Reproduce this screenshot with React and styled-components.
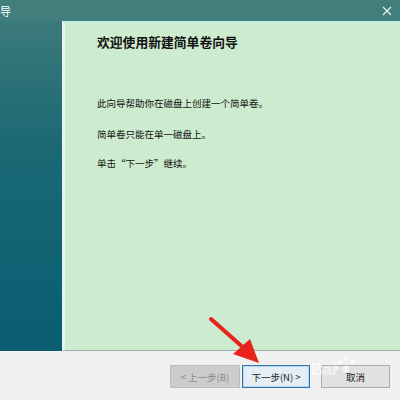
import React from "react"
import styled, { createGlobalStyle } from "styled-components"

const Global = createGlobalStyle`
  html, body {
    margin: 0;
    padding: 0;
    background: #f0f0f0;
  }
  body {
    font-family: "Noto Sans CJK SC", "Noto Sans", sans-serif;
  }
`

const Window = styled.div`
  position: relative;
  width: 400px;
  height: 400px;
  display: flex;
  flex-direction: column;
  overflow: hidden;
`

const TitleBar = styled.div`
  height: 21px;
  flex: 0 0 auto;
  background: #417e7c;
  display: flex;
  align-items: center;
  justify-content: space-between;
  color: #fff;
  font-size: 11px;
  padding: 0 8px 0 0;
  box-sizing: border-box;
`

const Body = styled.div`
  flex: 0 0 330px;
  display: flex;
  flex-direction: row;
`

const SidePanel = styled.div`
  width: 62px;
  flex: 0 0 auto;
  background: linear-gradient(
    180deg,
    #3b7a7b 0%,
    #2f7377 14%,
    #1a6874 40%,
    #0f6273 75%,
    #0b5e72 100%
  );
`

const Content = styled.div`
  flex: 1;
  background: #cdebcf;
  border-left: 3px solid #e6f3f2;
  border-top: 2px solid #c3ecdf;
  border-bottom: 1px solid #a8aca8;
  padding: 10px 0 0 32px;
  color: #111;
`

const Heading = styled.h1`
  margin: 0;
  font-size: 12.8px;
  font-weight: bold;
  line-height: 18px;
`

const Paragraph = styled.p`
  margin: ${(p) => p.$top}px 0 0;
  font-size: 9.5px;
  line-height: 14px;
`

const Footer = styled.div`
  flex: 1;
  background: #f0f0f0;
  display: flex;
  justify-content: flex-end;
  align-items: flex-start;
  padding: 14px 10px 0 0;
`

const Button = styled.button`
  width: ${(p) => p.$w || 69}px;
  height: 23px;
  margin-left: ${(p) => p.$gap || 0}px;
  box-sizing: border-box;
  font-family: inherit;
  font-size: 9.5px;
  padding: 0;
  background: ${(p) => (p.$disabled ? "#cccccc" : p.$focus ? "#e3eef7" : "#e1e1e1")};
  color: ${(p) => (p.$disabled ? "#8a8a8a" : "#1a1a1a")};
  border: 1px solid ${(p) => (p.$disabled ? "#bdbdbd" : p.$focus ? "#2f76b3" : "#adadad")};
  box-shadow: ${(p) => (p.$focus ? "inset 0 0 0 1px #b9d4ea" : "none")};
`

const Watermark = styled.div`
  position: absolute;
  left: 311px;
  top: 360px;
  color: rgba(255, 255, 255, 0.6);
  font-family: "Liberation Sans", sans-serif;
  font-size: 17px;
  font-weight: bold;
  letter-spacing: -0.5px;
  pointer-events: none;
`

const Overlay = styled.svg`
  position: absolute;
  left: 0;
  top: 0;
  pointer-events: none;
`

function CloseIcon() {
  return (
    <svg width="10" height="10" viewBox="0 0 10 10">
      <path d="M1 1 L9 9 M9 1 L1 9" stroke="#e8f0ef" strokeWidth="1.2" />
    </svg>
  )
}

export default function App() {
  return (
    <Window>
      <Global />
      <TitleBar>
        <span>导</span>
        <CloseIcon />
      </TitleBar>
      <Body>
        <SidePanel />
        <Content>
          <Heading>欢迎使用新建简单卷向导</Heading>
          <Paragraph $top={45}>此向导帮助你在磁盘上创建一个简单卷。</Paragraph>
          <Paragraph $top={17}>简单卷只能在单一磁盘上。</Paragraph>
          <Paragraph $top={15}>单击“下一步”继续。</Paragraph>
        </Content>
      </Body>
      <Footer>
        <Button $disabled $w={70}>&lt; 上一步(B)</Button>
        <Button $focus $gap={2} $w={68}>下一步(N) &gt;</Button>
        <Button $gap={11} $w={69}>取消</Button>
      </Footer>
      <Watermark>Bai</Watermark>
      <Overlay width="400" height="400" viewBox="0 0 400 400">
        <g fill="rgba(255,255,255,0.6)">
          <circle cx="340" cy="362" r="2" />
          <circle cx="346" cy="359" r="2" />
          <circle cx="352" cy="362" r="2" />
          <circle cx="337" cy="368" r="2" />
          <circle cx="346" cy="369" r="3.5" />
        </g>
        <path d="M211 319 L246 350" stroke="#e8231b" strokeWidth="4" strokeLinecap="round" />
        <path d="M259 363 L233 354 L250 339 Z" fill="#e8231b" />
      </Overlay>
    </Window>
  )
}
